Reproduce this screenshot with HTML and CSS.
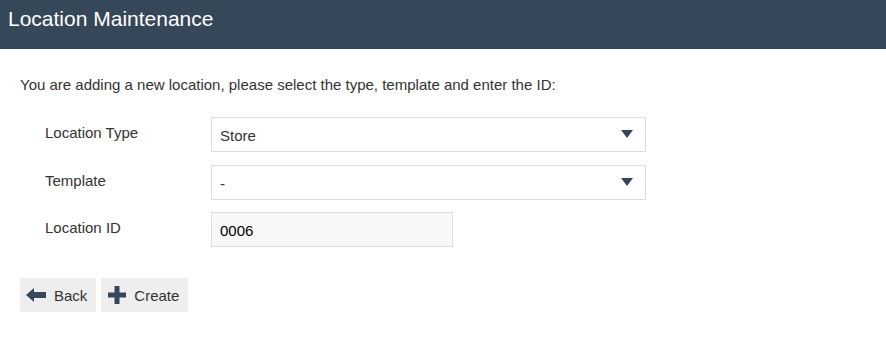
FILE: index.html
```html
<!doctype html>
<html lang="en">
<head>
    <meta charset="UTF-8">
    <title>Location Maintenance</title>
    <link rel="stylesheet" href="styles.css">
</head>
<body>
    <div class="header">
        <h1>Location Maintenance</h1>
    </div>

    <div class="content">
        <p class="intro">You are adding a new location, please select the type, template and enter the ID:</p>

        <div class="form">
            <div class="item">
                <div class="label">Location Type</div>
                <div class="select">
                    <span>Store</span>
                    <svg class="caret" width="12" height="8" viewBox="0 0 12 8"><path d="M0 0h12L6 8z" fill="#36475a"/></svg>
                </div>
            </div>
            <div class="item">
                <div class="label">Template</div>
                <div class="select">
                    <span>-</span>
                    <svg class="caret" width="12" height="8" viewBox="0 0 12 8"><path d="M0 0h12L6 8z" fill="#36475a"/></svg>
                </div>
            </div>
            <div class="item">
                <div class="label">Location ID</div>
                <input type="text" value="0006" class="idInput"/>
            </div>
        </div>

        <div class="buttons">
            <button>
                <svg width="20" height="14" viewBox="0 0 20 14"><path d="M0 7L8 0v4h12v6H8v4z" fill="#36475a"/></svg>
                Back
            </button>
            <button class="create">
                <svg width="18" height="18" viewBox="0 0 18 18"><path d="M6.5 0h5v6.5H18v5h-6.5V18h-5v-6.5H0v-5h6.5z" fill="#36475a"/></svg>
                Create
            </button>
        </div>
    </div>
</body>
</html>
```

FILE: styles.css
```css
body {
    margin: 0;
    font-family: "Liberation Sans", Arial, sans-serif;
    font-size: 15px;
    color: #333;
    background: #fff;
}
.header {
    background: #36475a;
    height: 49px;
    padding: 0 8px;
}
.header h1 {
    margin: 0;
    padding-top: 7px;
    font-size: 21px;
    font-weight: normal;
    color: #fff;
    line-height: 24px;
}
.content {
    padding: 0 20px;
}
.intro {
    margin: 27px 0 0;
    line-height: 17px;
}
.form {
    margin-top: 24px;
    padding-left: 25px;
}
.item {
    display: flex;
    align-items: flex-start;
    margin-bottom: 13px;
}
.item:nth-child(2) {
    margin-bottom: 12px;
}
.item:last-child {
    margin-bottom: 0;
}
.label {
    width: 166px;
    padding-top: 7px;
    line-height: 17px;
}
.select {
    width: 413px;
    height: 33px;
    border: 1px solid #ddd;
    display: flex;
    align-items: center;
    justify-content: space-between;
    padding: 0 12px 0 8px;
}
.select span {
    padding-top: 2px;
}
.caret {
    margin-bottom: 2px;
}
input[type="text"] {
    font-family: "Liberation Sans", Arial, sans-serif;
    font-size: 15px;
    color: #000;
    border: 1px solid #ddd;
    background: #f8f8f8;
    width: 242px;
    height: 35px;
    box-sizing: border-box;
    padding: 2px 8px 0;
    margin: 0;
    outline: none;
}
.buttons {
    display: flex;
    gap: 5px;
    margin-top: 31px;
}
button {
    display: flex;
    align-items: center;
    gap: 8px;
    height: 34px;
    background: #eee;
    border: none;
    padding: 0 9px 0 6px;
    font-family: "Liberation Sans", Arial, sans-serif;
    font-size: 15px;
    color: #333;
    cursor: pointer;
}
button.create {
    padding: 0 9px 0 7px;
}
button:hover {
    background: #e2e2e2;
}
```
